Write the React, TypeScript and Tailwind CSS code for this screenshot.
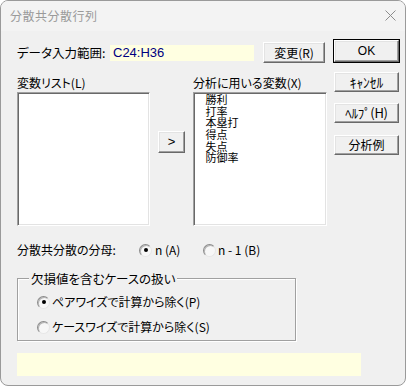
import React from "react";

const raised =
  "flex items-center justify-center bg-[#f0f0f0] border border-t-white border-l-white border-r-[#696969] border-b-[#696969] shadow-[inset_-1px_-1px_0_#a0a0a0,inset_1px_1px_0_#e3e3e3]";

const sunken =
  "bg-white border border-t-[#a0a0a0] border-l-[#a0a0a0] border-r-white border-b-white shadow-[inset_1px_1px_0_#696969,inset_-1px_-1px_0_#e3e3e3]";

function Btn({ label, className = "" }: { label: string; className?: string }) {
  return <div className={`${raised} ${className}`}>{label}</div>;
}

function Radio({ checked }: { checked?: boolean }) {
  return (
    <span className="w-[13px] h-[13px] rounded-full border border-t-[#8a8a8a] border-l-[#8a8a8a] border-r-[#e6e6e6] border-b-[#e6e6e6] bg-[#f7f7f7] shadow-[inset_1px_1px_0_#b5b5b5] flex items-center justify-center shrink-0">
      {checked && <span className="w-[4px] h-[4px] rounded-full bg-black" />}
    </span>
  );
}

const vars = ["勝利", "打率", "本塁打", "得点", "失点", "防御率"];

export default function App() {
  return (
    <div className="min-h-screen bg-white font-['Noto_Sans_CJK_JP',sans-serif] text-[12px] leading-[12px] text-black [font-feature-settings:'palt']">
      <div className="w-[406px] h-[386px] rounded-[8px] border border-[#9a9a9a] bg-[#f0f0f0] overflow-hidden flex flex-col">
        {/* title bar */}
        <div className="h-[30px] shrink-0 bg-[#f3f3f3] flex items-center justify-between pl-[9px] pr-[9px]">
          <span className="text-[12px] text-[#9a9a9a] tracking-[0.5px]">分散共分散行列</span>
          <svg width="11" height="11" viewBox="0 0 11 11" className="mb-[2px]">
            <path d="M0.5 0.5L10.5 10.5M10.5 0.5L0.5 10.5" stroke="#8c8c8c" strokeWidth="1" />
          </svg>
        </div>

        <div className="pl-[16px] pt-[8px]">
          <div className="flex">
            {/* left column */}
            <div className="w-[310px]">
              <div className="mt-[3px] h-[21px] flex items-center">
                <span className="w-[93px] text-[12.5px]">データ入力範囲:</span>
                <div className="w-[144px] h-[16px] bg-[#ffffe1] flex items-center pl-[3px] text-[13px] text-[#000080] font-['Liberation_Sans',sans-serif]">
                  C24:H36
                </div>
                <Btn label="変更(R)" className="ml-[9px] w-[62px] h-[21px]" />
              </div>

              <div className="mt-[14px] flex">
                <span className="w-[176px]">変数リスト(L)</span>
                <span>分析に用いる変数(X)</span>
              </div>

              <div className="mt-[3px] flex items-start">
                <div className={`${sunken} w-[133px] h-[134px]`} />
                <Btn label=">" className="ml-[8px] mt-[39px] w-[28px] h-[22px] font-['Liberation_Sans',sans-serif] text-[13px]" />
                <div className={`${sunken} ml-[8px] w-[134px] h-[134px] pl-[11px] pt-[1px]`}>
                  {vars.map((v) => (
                    <div key={v} className="h-[11.7px] leading-[11.7px] text-[11px]">
                      {v}
                    </div>
                  ))}
                </div>
              </div>
            </div>

            {/* right column buttons */}
            <div className="ml-[6px] flex flex-col [font-feature-settings:normal]">
              <div className="border border-black w-[67px] h-[24px]">
                <Btn label="OK" className="w-full h-full font-['Liberation_Sans',sans-serif]" />
              </div>
              <Btn label="ｷｬﾝｾﾙ" className="ml-[1px] mt-[9px] w-[65px] h-[20px] text-[13.5px]" />
              <Btn label="ﾍﾙﾌﾟ(H)" className="ml-[1px] mt-[11px] w-[65px] h-[20px] text-[13px] tracking-[-0.3px]" />
              <Btn label="分析例" className="ml-[1px] mt-[12px] w-[65px] h-[20px]" />
            </div>
          </div>

          {/* denominator */}
          <div className="mt-[17px] h-[14px] flex items-center">
            <span className="w-[122px]">分散共分散の分母:</span>
            <div className="w-[64px] flex items-center">
              <Radio checked />
              <span className="ml-[3px]">n (A)</span>
            </div>
            <div className="flex items-center">
              <Radio />
              <span className="ml-[2px]">n - 1 (B)</span>
            </div>
          </div>

          {/* missing values group */}
          <div className="relative mt-[21px] w-[279px] h-[63px] border border-[#a0a0a0] shadow-[inset_1px_1px_0_#fff,1px_1px_0_#fff] pl-[19px] pt-[16px]">
            <span className="absolute left-[11px] top-[-7px] px-[2px] bg-[#f0f0f0] text-[12.5px] leading-[13px]">
              欠損値を含むケースの扱い
            </span>
            <div className="h-[14px] flex items-center">
              <Radio checked />
              <span className="ml-[2px]">ペアワイズで計算から除く(P)</span>
            </div>
            <div className="mt-[11px] h-[14px] flex items-center">
              <Radio />
              <span className="ml-[2px]">ケースワイズで計算から除く(S)</span>
            </div>
          </div>

          {/* status bar */}
          <div className="mt-[12px] w-[344px] h-[23px] bg-[#ffffe1]" />
        </div>
      </div>
    </div>
  );
}
